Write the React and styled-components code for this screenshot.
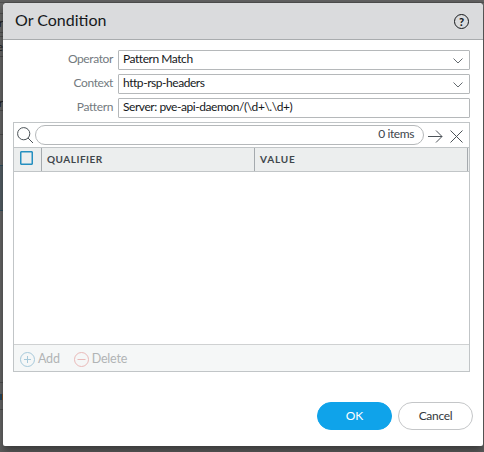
import React from "react";
import styled, { createGlobalStyle, css } from "styled-components";

const Global = createGlobalStyle`
  * { box-sizing: border-box; }
  html, body { margin: 0; padding: 0; overflow: hidden; background: #666; }
  body { font-family: Lato, "Liberation Sans", sans-serif; font-size: 12px; color: #15181b; }
`;

const Page = styled.div`
  display: grid;
  grid-template-columns: 3px 480px 1px;
  width: 484px;
  height: 452px;
  overflow: hidden;
  background: linear-gradient(#626262 0 2px, #505050 2px 3px, #686868 3px 440px, #5c5c5c 452px);
`;

const Backdrop = styled.div`
  display: flex;
  flex-direction: column;
  overflow: hidden;
  height: 452px;
`;

const BackdropRow = styled.div`
  flex: none;
  height: ${(p) => p.$h}px;
  background: ${(p) => p.$bg || "transparent"};
  border-bottom: 1px solid ${(p) => p.$line || "#505050"};
  display: flex;
  justify-content: flex-end;
  align-items: ${(p) => p.$align || "center"};
  font-size: 12px;
  line-height: 14px;
  color: #222;
`;

const Marker = styled.i`
  width: 3px;
  height: 6px;
  margin-top: 2px;
  background: linear-gradient(90deg, #284a60 0 2px, #8a5425 2px);
`;

const Dialog = styled.section`
  display: flex;
  flex-direction: column;
  margin-top: 3px;
  height: 443px;
  background: #fff;
  border-radius: 4px 4px 2px 2px;
  box-shadow: 0 4px 9px rgba(0, 0, 0, 0.45);
`;

const TitleBar = styled.header`
  display: flex;
  align-items: center;
  justify-content: space-between;
  height: 37px;
  padding: 0 14px 2px 12px;
  background: #dadbdd;
  border-bottom: 1px solid #a9acae;
  border-radius: 4px 4px 0 0;
`;

const Title = styled.h1`
  margin: 0;
  font-size: 16px;
  line-height: 20px;
  font-weight: 400;
`;

const Form = styled.div`
  display: flex;
  flex-direction: column;
  gap: 4px;
  padding: 10px 13px 0 10px;
`;

const Field = styled.label`
  display: grid;
  grid-template-columns: 100px 352px;
  column-gap: 5px;
  height: 20px;
`;

const Label = styled.span`
  text-align: right;
  line-height: 18px;
  letter-spacing: -0.38px;
  color: #737a80;
`;

const Control = styled.span`
  display: flex;
  justify-content: space-between;
  align-items: center;
  padding: 0 7px 2px 4px;
  border: 1px solid #b5b8ba;
  border-radius: 1px;
  line-height: 16px;
  letter-spacing: -0.45px;
  white-space: pre;
`;

const Panel = styled.div`
  display: flex;
  flex-direction: column;
  height: 250px;
  width: 457px;
  margin: 4px 0 0 10px;
  border: 1px solid #c1c5c7;
`;

const SearchBar = styled.div`
  display: flex;
  height: 24px;
  padding: 2px 0 0 2px;
`;

const SearchBox = styled.div`
  width: 389px;
  height: 20px;
  margin-left: 1px;
  padding-right: 9px;
  border: 1px solid #b5b8ba;
  border-radius: 10px;
  text-align: right;
  line-height: 16px;
  letter-spacing: -0.4px;
  color: #40464c;
`;

const HeaderRow = styled.div`
  display: grid;
  grid-template-columns: 28px 213px 213px 1px;
  height: 25px;
  border: solid #c1c5c7;
  border-width: 1px 0;
  background: #eceeee;
`;

const HeaderCell = styled.div`
  padding: 1px 0 0 5px;
  border-right: 1px solid #a5aaae;
  font-size: 10px;
  line-height: 21px;
  font-weight: 700;
  letter-spacing: ${(p) => p.$track || 0.5}px;
  color: #40464c;
`;

const CheckBox = styled.div`
  width: 13px;
  height: 14px;
  margin: 2px 0 0 1px;
  border: 1px solid #258fc0;
  box-shadow: inset 0 0 0 0.5px #258fc0;
  border-radius: 1px;
`;

const Body = styled.div`
  flex: 1;
`;

const Footer = styled.footer`
  display: flex;
  align-items: center;
  height: 27px;
  padding: 2px 0 0 6px;
  gap: 14px;
  border-top: 1px solid #cfd1d2;
  background: #f5f7f7;
`;

const Action = styled.span`
  display: flex;
  align-items: center;
  gap: 3px;
  font-size: 12.5px;
  line-height: 16px;
  letter-spacing: -0.2px;
  color: #b1b4b5;
`;

const Buttons = styled.div`
  display: flex;
  justify-content: flex-end;
  gap: 6px;
  margin-top: 30px;
  padding-right: 10px;
`;

const Button = styled.button`
  width: 75px;
  height: 28px;
  padding: 0;
  border: 1px solid #c4c6c8;
  border-radius: 14px;
  background: #fff;
  font: 12px/24px Lato, sans-serif;
  letter-spacing: -0.3px;
  color: #33383d;
  ${(p) => p.$primary && css`
    border-color: #0fa3ea;
    background: #0fa3ea;
    color: #fff;
    letter-spacing: 0;
  `}
`;

const Icon = styled.svg`
  display: block;
  flex: none;
  fill: none;
  stroke: ${(p) => p.$color || "#4c5358"};
  stroke-width: ${(p) => p.$weight || 1};
  margin: ${(p) => p.$margin || 0};
`;

const HelpMark = styled.div`
  width: 15px;
  height: 15px;
  margin-top: 3px;
  border: 1.4px solid #15181b;
  border-radius: 50%;
  text-align: center;
  font: 900 11px/13px Lato, sans-serif;
`;

const Chevron = () => (
  <Icon width="10" height="6" viewBox="0 0 10 6" $color="#656b70" $margin="3px -1px 0 0">
    <path d="M0.5 0.5 5 5 9.5 0.5" />
  </Icon>
);

const fields = [
  { label: "Operator", value: "Pattern Match", select: true },
  { label: "Context", value: "http-rsp-headers", select: true },
  { label: "Pattern", value: "Server: pve-api-daemon/(\\d+\\.\\d+)" },
];

export default function App() {
  return (
    <>
      <Global />
      <Page>
        <Backdrop>
          <BackdropRow $h={3} />
          <BackdropRow $h={11} />
          <BackdropRow $h={19}>r</BackdropRow>
          <BackdropRow $h={4} />
          <BackdropRow $h={20}>e</BackdropRow>
          <BackdropRow $h={54} $align="flex-end">r</BackdropRow>
          <BackdropRow $h={24} />
          <BackdropRow $h={31} $line="#315263" />
          <BackdropRow $h={45} $bg="#566167" $line="#315263" />
          <BackdropRow $h={172} />
          <BackdropRow $h={27}><Marker /></BackdropRow>
        </Backdrop>
        <Dialog>
          <TitleBar>
            <Title>Or Condition</Title>
            <HelpMark>?</HelpMark>
          </TitleBar>
          <Form>
            {fields.map((f) => (
              <Field key={f.label}>
                <Label>{f.label}</Label>
                <Control>{f.value}{f.select && <Chevron />}</Control>
              </Field>
            ))}
          </Form>
          <Panel>
            <SearchBar>
              <Icon width="17" height="17" viewBox="0 0 17 17" $margin="2px 0 0 1px">
                <circle cx="6.7" cy="6.7" r="6.1" />
                <path d="m11 11 5 5" />
              </Icon>
              <SearchBox>0 items</SearchBox>
              <Icon width="15" height="13" viewBox="0 0 15 13" $margin="5px 0 0 4px">
                <path d="M0 6.5h14M8 .5l6 6-6 6" />
              </Icon>
              <Icon width="13" height="13" viewBox="0 0 13 13" $margin="5px 0 0 7px">
                <path d="m.5.5 12 12M12.5.5l-12 12" />
              </Icon>
            </SearchBar>
            <HeaderRow>
              <HeaderCell><CheckBox /></HeaderCell>
              <HeaderCell $track={0.5}>QUALIFIER</HeaderCell>
              <HeaderCell $track={0.8}>VALUE</HeaderCell>
            </HeaderRow>
            <Body />
            <Footer>
              <Action>
                <Icon width="15" height="15" viewBox="0 0 15 15" $color="#a6c9da">
                  <circle cx="7.5" cy="7.5" r="7" />
                  <path d="M4 7.5h7M7.5 4v7" />
                </Icon>
                Add
              </Action>
              <Action>
                <Icon width="15" height="15" viewBox="0 0 15 15" $color="#e9b9b8">
                  <circle cx="7.5" cy="7.5" r="7" />
                  <path d="M3.5 7.5h8" />
                </Icon>
                Delete
              </Action>
            </Footer>
          </Panel>
          <Buttons>
            <Button $primary>OK</Button>
            <Button>Cancel</Button>
          </Buttons>
        </Dialog>
      </Page>
    </>
  );
}
